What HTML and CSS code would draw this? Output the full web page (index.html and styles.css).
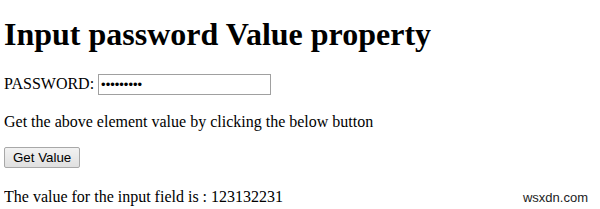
FILE: index.html
```html
<!DOCTYPE html>
<html>
<head>
<meta charset="utf-8">
<link rel="stylesheet" href="styles.css">
</head>
<body>
<h1 class="title">Input password Value property</h1>
<p class="row">PASSWORD: <input class="pass" type="password" value="123132231"></p>
<p class="row get">Get the above element value by clicking the below button</p>
<p class="row btn-row"><button class="btn">Get Value</button></p>
<p class="row last">The value for the input field is : 123132231</p>
<div class="mark">wsxdn.com</div>
</body>
</html>
```
FILE: styles.css
```css
html, body {
  overflow: hidden;
}
body {
  margin: 0 4px;
  font-family: "Liberation Serif", "Times New Roman", serif;
  font-size: 16px;
  color: #000;
  background: #fff;
}
.title {
  font-size: 32px;
  font-weight: bold;
  margin: 16px 0 21px;
}
.row {
  margin: 16px 0;
}
.get {
  margin-top: 18px;
}
.btn-row {
  margin: 12px 0 20px;
}
.last {
  margin-bottom: 0;
}
.pass {
  box-sizing: border-box;
  width: 173px;
  height: 21px;
  border: 1px solid #a0a0a0;
  padding: 1px 2px;
  font-size: 13px;
  font-family: "Liberation Sans", Arial, sans-serif;
}
.btn {
  box-sizing: border-box;
  height: 21px;
  font-family: "Liberation Sans", Arial, sans-serif;
  font-size: 13.33px;
  padding: 1px 8px;
  border: 1px solid #a8a8a8;
  background: linear-gradient(#f2f2f2, #e0e0e0);
  border-radius: 2px;
  color: #000;
}
.mark {
  position: absolute;
  right: 12px;
  top: 190px;
  line-height: 15px;
  font-family: "Liberation Sans", Arial, sans-serif;
  font-size: 13px;
  color: #222;
}
```
